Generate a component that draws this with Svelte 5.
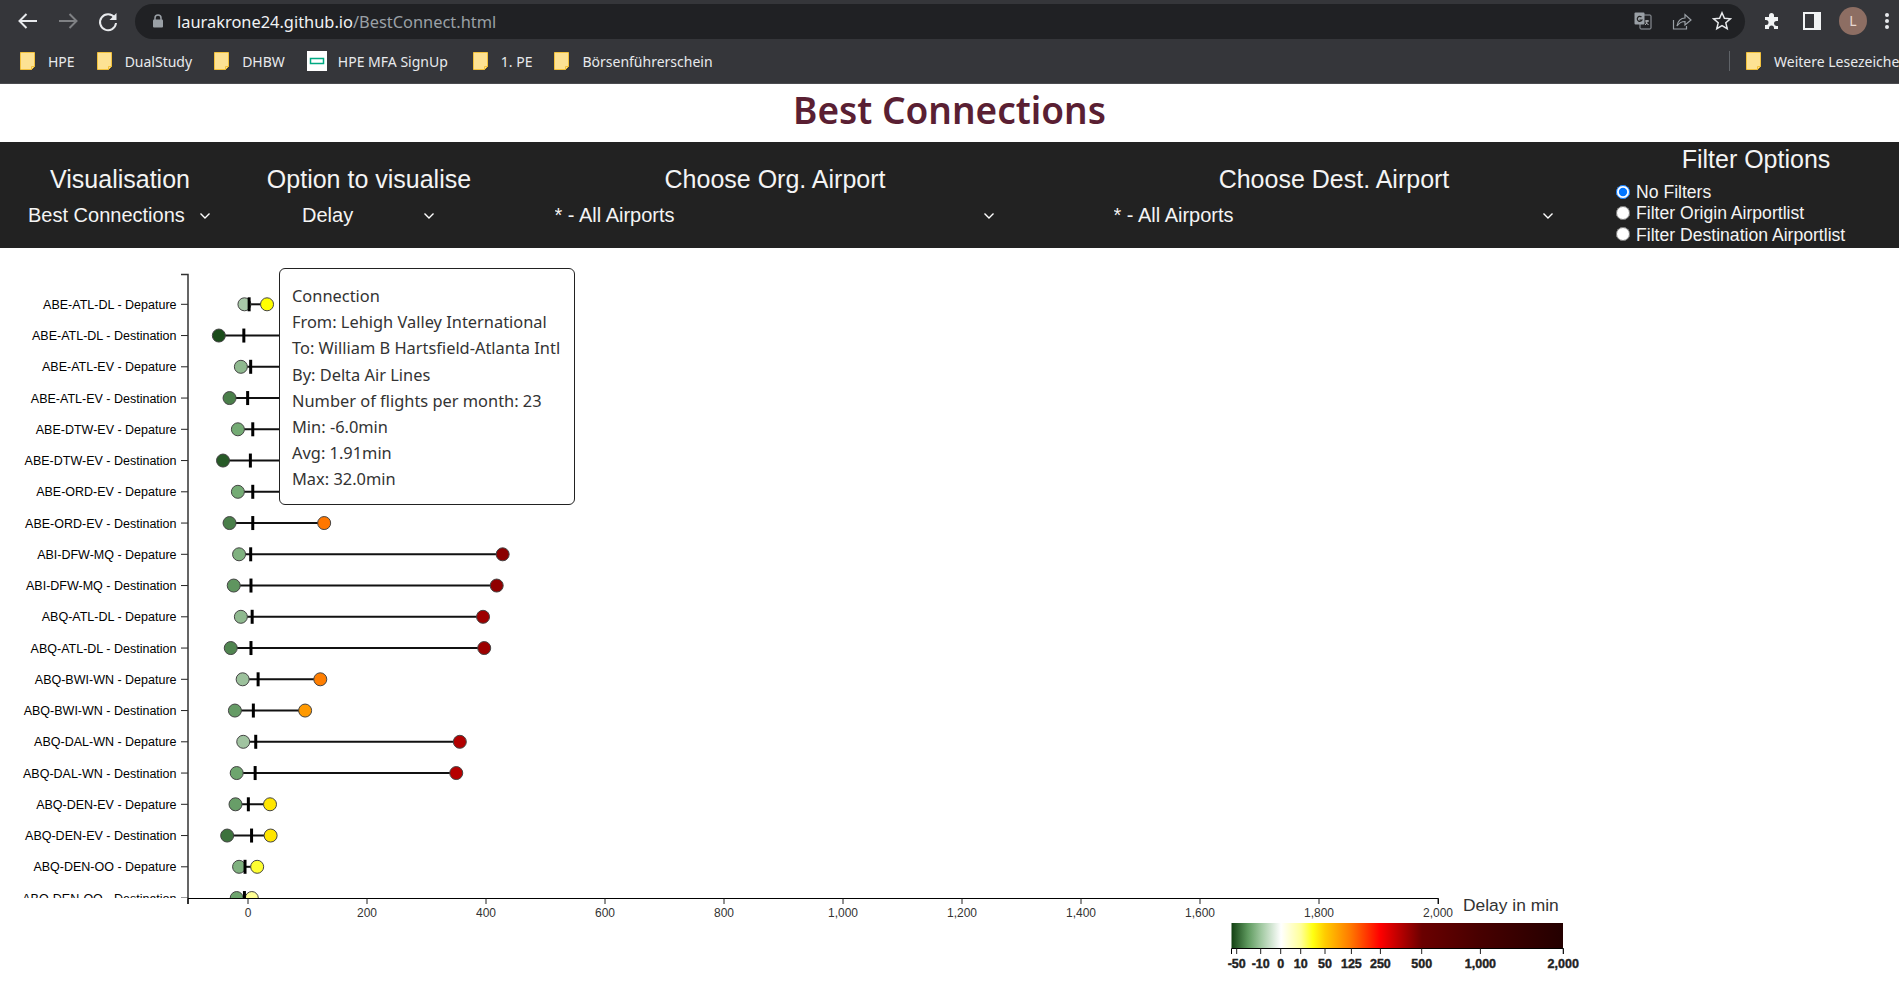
<script>
	// min / avg / max delay per connection, first 20 rows of the list
	const rows = [
		['ABE-ATL-DL - Depature', -6, 1.91, 32],
		['ABE-ATL-DL - Destination', -49, -7, 140],
		['ABE-ATL-EV - Depature', -12, 4.5, 150],
		['ABE-ATL-EV - Destination', -31, -0.6, 120],
		['ABE-DTW-EV - Depature', -17, 8, 180],
		['ABE-DTW-EV - Destination', -42, 4, 160],
		['ABE-ORD-EV - Depature', -17, 8, 130],
		['ABE-ORD-EV - Destination', -31, 8, 128],
		['ABI-DFW-MQ - Depature', -15, 4.5, 428],
		['ABI-DFW-MQ - Destination', -24, 5, 418],
		['ABQ-ATL-DL - Depature', -12, 7, 395],
		['ABQ-ATL-DL - Destination', -29, 5, 397],
		['ABQ-BWI-WN - Depature', -9, 17, 121.5],
		['ABQ-BWI-WN - Destination', -22, 9, 96],
		['ABQ-DAL-WN - Depature', -8, 13, 356],
		['ABQ-DAL-WN - Destination', -19, 12, 350],
		['ABQ-DEN-EV - Depature', -21, 0.6, 37],
		['ABQ-DEN-EV - Destination', -35, 6, 38],
		['ABQ-DEN-OO - Depature', -15, -5, 15.4],
		['ABQ-DEN-OO - Destination', -19, -6, 6.4]
	];

	const colorStops = [
		[-50, [24, 74, 24]],
		[-42, [39, 90, 39]],
		[-31, [74, 127, 74]],
		[-17, [116, 171, 116]],
		[-12, [143, 185, 143]],
		[-6, [168, 200, 168]],
		[0, [255, 255, 255]],
		[6, [255, 255, 153]],
		[15, [255, 255, 51]],
		[32, [255, 255, 0]],
		[37, [255, 230, 0]],
		[96, [255, 153, 0]],
		[125, [255, 122, 0]],
		[250, [255, 0, 0]],
		[350, [181, 0, 0]],
		[428, [139, 0, 0]],
		[500, [106, 0, 0]],
		[1000, [71, 0, 0]],
		[2000, [36, 0, 0]]
	];

	function color(v) {
		for (let i = 1; i < colorStops.length; i++) {
			const [b, cb] = colorStops[i];
			const [a, ca] = colorStops[i - 1];
			if (v <= b) {
				const t = Math.max(0, (v - a) / (b - a));
				return `rgb(${ca.map((c, k) => Math.round(c + (cb[k] - c) * t)).join(',')})`;
			}
		}
		return 'rgb(36,0,0)';
	}

	const x = (v) => 248 + v * 0.595;
	const y = (i) => 304.3 + i * 31.25;

	const xTicks = [0, 200, 400, 600, 800, 1000, 1200, 1400, 1600, 1800, 2000];

	// legend scale is not linear, offsets are in px on the bar
	const legendLeft = 1231.5;
	const legendWidth = 331.5;
	const legendTicks = [
		['-50', 1236.7],
		['-10', 1260.7],
		['0', 1280.7],
		['10', 1300.7],
		['50', 1325],
		['125', 1351.4],
		['250', 1380.4],
		['500', 1421.7],
		['1,000', 1480.4],
		['2,000', 1563.2]
	];
	const legendStops = [
		[1231, '#0f3d0f'],
		[1248, '#5f9a5f'],
		[1261, '#a0c8a0'],
		[1281, '#ffffff'],
		[1301, '#ffff99'],
		[1313, '#ffff11'],
		[1325, '#ffcc00'],
		[1351, '#ff7700'],
		[1380, '#ff0000'],
		[1422, '#6a0000'],
		[1480, '#470000'],
		[1563, '#240000']
	];

	const tooltip = [
		'Connection',
		'From: Lehigh Valley International',
		'To: William B Hartsfield-Atlanta Intl',
		'By: Delta Air Lines',
		'Number of flights per month: 23',
		'Min: -6.0min',
		'Avg: 1.91min',
		'Max: 32.0min'
	];

	const bookmarks = ['HPE', 'DualStudy', 'DHBW', 'HPE MFA SignUp', '1. PE', 'Börsenführerschein'];
</script>

{#snippet folder()}
	<svg class="folder" width="15" height="18" viewBox="0 0 15 18">
		<path d="M.5.5h14v14l-3 3H.5z" fill="#fde293" stroke="#f2c13c" />
		<path d="M11.5 17.5v-3h3" fill="none" stroke="#f2c13c" />
	</svg>
{/snippet}

{#snippet chevron()}
	<svg class="chevron" width="12" height="8" viewBox="0 0 12 8">
		<path d="M1.5 1.5 6 6l4.5-4.5" fill="none" stroke="#fff" stroke-width="1.4" />
	</svg>
{/snippet}

<div class="browser">
	<div class="toolbar">
		<div class="nav">
			<svg width="40" height="24" viewBox="0 0 40 24">
				<path d="M29 12H12M18.5 5 11.5 12l7 7" fill="none" stroke="#e8eaed" stroke-width="2" />
			</svg>
			<svg width="40" height="24" viewBox="0 0 40 24">
				<path d="M11 12h17M21.500 5l7 7-7 7" fill="none" stroke="#7f8184" stroke-width="2" />
			</svg>
			<svg width="40" height="24" viewBox="0 0 40 24">
				<path d="M26.500 8.500A8 8 0 1 0 28 14" fill="none" stroke="#e8eaed" stroke-width="2" />
				<path d="M28.500 4v7h-7z" fill="#e8eaed" />
			</svg>
		</div>
		<div class="url">
			<svg class="lock" width="12" height="14" viewBox="0 0 12 14">
				<path d="M3 6V4a3 3 0 0 1 6 0v2" fill="none" stroke="#9aa0a6" stroke-width="1.500" />
				<rect x="1" y="5.500" width="10" height="8" rx="1" fill="#9aa0a6" />
			</svg>
			<span class="host">laurakrone24.github.io<span class="path">/BestConnect.html</span></span>
			<div class="url-icons">
				<svg width="18" height="18" viewBox="0 0 18 18">
					<rect x="6" y="3" width="11" height="14" rx="1" fill="none" stroke="#9aa0a6" />
					<rect x="0.500" y="0.500" width="10" height="12" rx="1" fill="#9aa0a6" />
					<path d="M7.500 5a2.500 2.500 0 1 0 .5 3H5.500" fill="none" stroke="#222" stroke-width="1.200" />
					<path d="M11 9h4M13 8v1c0 2-1 3-2 4M12 10.500l2.500 2.500" fill="none" stroke="#c4c7ca" />
				</svg>
				<svg width="20" height="18" viewBox="0 0 20 18">
					<path d="M1.500 8v9h13v-3" fill="none" stroke="#9aa0a6" stroke-width="1.200" />
					<path d="M5 14c.500-5 4-8 8-8V2.500l6 5.500-6 5V9.500c-3.500 0-6 1.500-8 4.500z" fill="none" stroke="#9aa0a6" stroke-width="1.200" />
				</svg>
				<svg width="20" height="20" viewBox="0 0 20 20">
					<path d="m10 1.800 2.400 5.500 6 .5-4.600 4 1.400 5.900-5.200-3.100-5.200 3.100 1.400-5.900-4.600-4 6-.5z" fill="none" stroke="#e8eaed" stroke-width="1.500" />
				</svg>
			</div>
		</div>
		<div class="actions">
			<svg class="puzzle" width="18" height="18" viewBox="0 0 18 18">
				<path d="M6 3.500a2.500 2.500 0 0 1 5 0V5h4v4h-1.500a2.500 2.500 0 0 0 0 5H15v3h-4v-1a2.500 2.500 0 0 0-5 0v1H2v-4h1a2.500 2.500 0 0 0 0-5H2V5h4z" fill="#f1f3f4" />
			</svg>
			<svg class="panel" width="18" height="18" viewBox="0 0 18 18">
				<path d="M1 1h16v16H1z" fill="none" stroke="#f1f3f4" stroke-width="2" />
				<path d="M11 1h6v16h-6z" fill="#f1f3f4" />
			</svg>
			<div class="avatar">L</div>
			<svg class="dots" width="4" height="16" viewBox="0 0 4 16">
				<circle cx="2" cy="2" r="2" fill="#e8eaed" />
				<circle cx="2" cy="8" r="2" fill="#e8eaed" />
				<circle cx="2" cy="14" r="2" fill="#e8eaed" />
			</svg>
		</div>
	</div>
	<div class="bookmarks">
		{#each bookmarks as b}
			<div class="bookmark">
				{#if b === 'HPE MFA SignUp'}
					<svg width="20" height="20" viewBox="0 0 20 20">
						<rect width="20" height="20" fill="#fff" />
						<rect x="3.500" y="7.500" width="13" height="5" fill="none" stroke="#01a982" stroke-width="1.500" />
					</svg>
				{:else}
					{@render folder()}
				{/if}
				<span>{b}</span>
			</div>
		{/each}
		<div class="more">
			{@render folder()}
			<span>Weitere Lesezeichen</span>
		</div>
	</div>
</div>

<h1>Best Connections</h1>

<div class="controls">
	<div class="control">
		<div class="label">Visualisation</div>
		<div class="select" style="width:192px">
			<select><option>Best Connections</option></select>
			{@render chevron()}
		</div>
	</div>
	<div class="control">
		<div class="label">Option to visualise</div>
		<div class="select" style="width:142px">
			<select><option>Delay</option></select>
			{@render chevron()}
		</div>
	</div>
	<div class="control">
		<div class="label">Choose Org. Airport</div>
		<div class="select" style="width:449px">
			<select><option>* - All Airports</option></select>
			{@render chevron()}
		</div>
	</div>
	<div class="control">
		<div class="label">Choose Dest. Airport</div>
		<div class="select" style="width:449px">
			<select><option>* - All Airports</option></select>
			{@render chevron()}
		</div>
	</div>
	<div class="filters">
		<div class="label filter-title">Filter Options</div>
		<label><input type="radio" name="filter" checked /> No Filters</label>
		<label><input type="radio" name="filter" /> Filter Origin Airportlist</label>
		<label><input type="radio" name="filter" /> Filter Destination Airportlist</label>
	</div>
</div>

<div class="chart">
	<svg width="1899" height="734" viewBox="0 248 1899 734">
		<defs>
			<clipPath id="plot"><rect x="0" y="260" width="1899" height="638" /></clipPath>
			<linearGradient id="legend" gradientUnits="userSpaceOnUse" x1="1231" x2="1563" y1="0" y2="0">
				{#each legendStops as [px, c]}
					<stop offset={(px - 1231) / 332} stop-color={c} />
				{/each}
			</linearGradient>
		</defs>

		<g clip-path="url(#plot)">
			{#each rows as [name, min, avg, max], i}
				<text class="row-label" x="176.500" y={y(i) + 4.5}>{name}</text>
				<line class="tick" x1="181" x2="188" y1={y(i)} y2={y(i)} />
				<line class="range" x1={x(min)} x2={x(max)} y1={y(i)} y2={y(i)} />
				<circle class="dot" cx={x(min)} cy={y(i)} r="6.5" fill={color(min)} />
				<circle class="dot" cx={x(max)} cy={y(i)} r="6.5" fill={color(max)} />
				<line class="avg" x1={x(avg)} x2={x(avg)} y1={y(i) - 7} y2={y(i) + 7} />
			{/each}
		</g>

		<path class="axis-y" d="M181 274.500H188V904" />
		<path class="axis-x" d="M188 904V898.500H1438.500V904" />
		{#each xTicks as t}
			<line class="tick" x1={x(t)} x2={x(t)} y1="898.500" y2="904" />
			<text class="x-label" x={x(t)} y="917">{t.toLocaleString('en-US')}</text>
		{/each}

		<text class="axis-title" x="1463" y="911">Delay in min</text>

		<rect x={legendLeft} y="923" width={legendWidth} height="25" fill="url(#legend)" />
		<path class="axis-x" d="M1231.500 954V948.500H1563.500V954" />
		{#each legendTicks as [label, px]}
			<line class="tick" x1={px} x2={px} y1="948.500" y2="954" />
			<text class="legend-label" x={px} y="968">{label}</text>
		{/each}
	</svg>

	<div class="tooltip">
		{#each tooltip as line}
			<div>{line}</div>
		{/each}
	</div>
</div>

<style>
	:global(body) {
		margin: 0;
		background: #fff;
		overflow: hidden;
		font-family: 'Liberation Sans', Arial, sans-serif;
	}

	.browser {
		height: 84px;
		background: #35363a;
		font-family: 'Noto Sans', sans-serif;
		color: #fff;
	}
	.toolbar {
		display: flex;
		align-items: center;
		height: 41px;
		padding-left: 8px;
	}
	.nav {
		display: flex;
		width: 127px;
	}
	.url {
		flex: 1;
		display: flex;
		align-items: center;
		height: 35px;
		margin-top: 1px;
		padding-left: 17px;
		background: #202124;
		border-radius: 18px;
	}
	.lock {
		margin-right: 13px;
	}
	.host {
		font-size: 16.400px;
		color: #f1f3f4;
	}
	.path {
		color: #9aa0a6;
	}
	.url-icons {
		margin-left: auto;
		display: flex;
		align-items: center;
		gap: 20px;
		padding-right: 13px;
	}
	.actions {
		display: flex;
		align-items: center;
		width: 154px;
		height: 41px;
		padding-left: 18px;
		box-sizing: border-box;
	}
	.panel {
		margin-left: 22px;
	}
	.avatar {
		width: 28px;
		height: 28px;
		margin-left: 18px;
		border-radius: 50%;
		background: #8d6e63;
		color: #e8d8d0;
		font-size: 14px;
		line-height: 28px;
		text-align: center;
	}
	.dots {
		margin-left: 18px;
	}
	.bookmarks {
		display: flex;
		align-items: center;
		height: 40px;
		padding-left: 20px;
		padding-bottom: 2px;
		gap: 22px;
		border-bottom: 1px solid #4a4b4f;
		font-size: 14px;
		color: #e8eaed;
	}
	.folder {
		flex-shrink: 0;
	}
	.bookmark {
		display: flex;
		align-items: center;
		gap: 13px;
	}
	.bookmark:nth-child(4) {
		gap: 11px;
		margin-right: 3px;
	}
	.more {
		margin-left: auto;
		display: flex;
		align-items: center;
		flex: 0 0 153px;
		gap: 13px;
		padding-left: 16px;
		height: 20px;
		overflow: hidden;
		white-space: nowrap;
		border-left: 1px solid #5f6368;
	}

	h1 {
		margin: 0;
		height: 58px;
		line-height: 52px;
		text-align: center;
		font-family: 'Noto Sans', sans-serif;
		font-size: 37px;
		font-weight: 600;
		color: #5a1f33;
	}

	.controls {
		display: grid;
		grid-template-columns: 240px 258px 554px 564px 1fr;
		height: 106px;
		background: #222;
		color: #f4f4f4;
	}
	.control {
		display: flex;
		flex-direction: column;
		align-items: center;
		padding-top: 23px;
	}
	.label {
		font-size: 25px;
		line-height: 28px;
		white-space: nowrap;
	}
	.select {
		position: relative;
		margin-top: 8px;
		height: 28px;
	}
	select {
		appearance: none;
		width: 100%;
		height: 100%;
		padding: 0 4px;
		border: 0;
		background: #222;
		color: #f4f4f4;
		font-family: inherit;
		font-size: 20px;
	}
	.chevron {
		position: absolute;
		right: 5px;
		top: 11px;
	}
	.filters {
		display: flex;
		flex-direction: column;
		padding-top: 3px;
	}
	.filter-title {
		width: 280px;
		margin-bottom: 9px;
		text-align: center;
	}
	.filters label {
		display: flex;
		align-items: center;
		gap: 6px;
		height: 21.300px;
		font-size: 17.600px;
		white-space: nowrap;
	}
	.filters input {
		margin: -2px 0 0 0;
		width: 14px;
		height: 14px;
	}

	.chart {
		position: relative;
		height: 734px;
	}
	.chart svg {
		display: block;
	}
	.row-label {
		font-size: 12.500px;
		text-anchor: end;
		fill: #000;
	}
	.tick {
		stroke: #222;
	}
	.range {
		stroke: #111;
		stroke-width: 2;
	}
	.dot {
		stroke: #444;
		stroke-width: 1;
	}
	.avg {
		stroke: #000;
		stroke-width: 3;
	}
	.axis-y {
		fill: none;
		stroke: #333;
		stroke-width: 1.500;
	}
	.axis-x {
		fill: none;
		stroke: #000;
	}
	.x-label {
		font-size: 12px;
		text-anchor: middle;
		fill: #333;
	}
	.axis-title {
		font-size: 17.400px;
		fill: #333;
	}
	.legend-label {
		font-size: 12.500px;
		font-weight: 700;
		text-anchor: middle;
		fill: #222;
		stroke: #222;
		stroke-width: 0.400px;
	}
	.tooltip {
		position: absolute;
		left: 279px;
		top: 20px;
		width: 296px;
		height: 237px;
		box-sizing: border-box;
		padding: 14px 0 0 12px;
		background: #fff;
		border: 1px solid #222;
		border-radius: 6px;
		font-family: 'Noto Sans', sans-serif;
		font-size: 16.400px;
		line-height: 26.200px;
		color: #333;
		white-space: nowrap;
	}
</style>
